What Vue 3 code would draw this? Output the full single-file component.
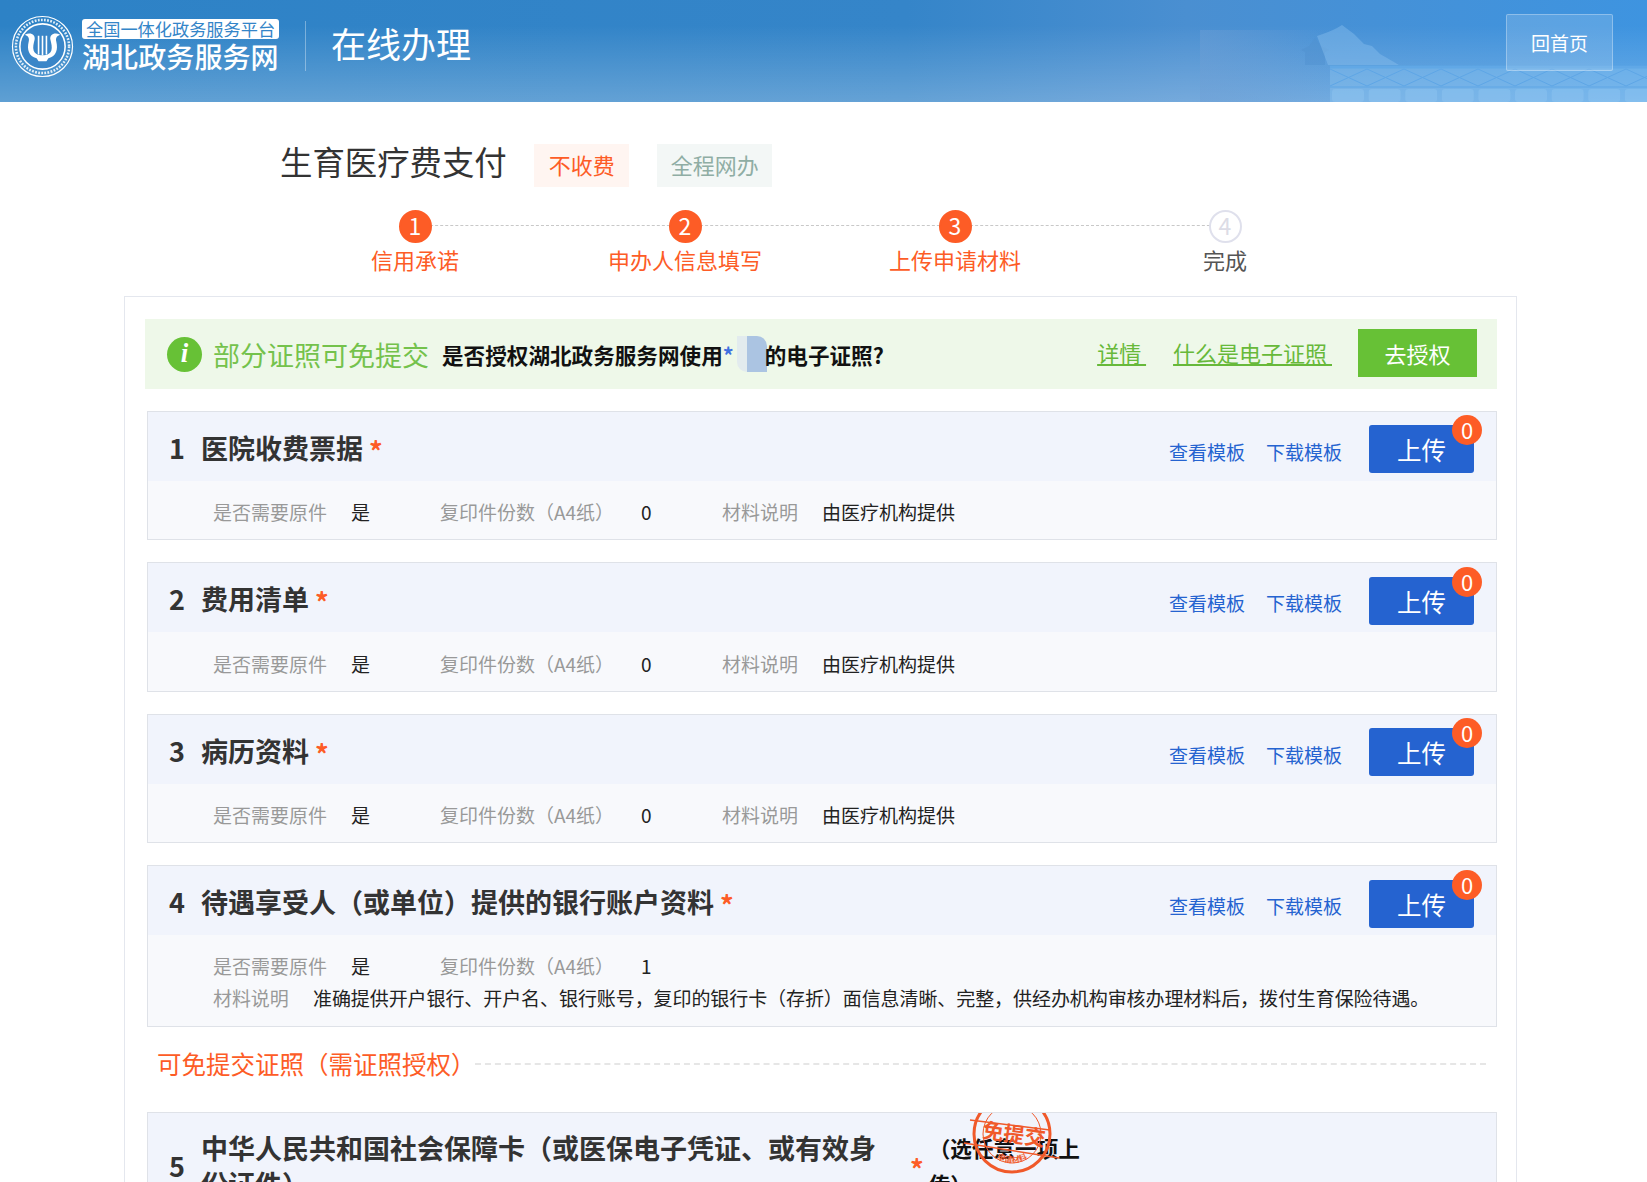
<script setup>
const items = [
  { n: 1, title: '医院收费票据', copies: 0, desc: '由医疗机构提供' },
  { n: 2, title: '费用清单', copies: 0, desc: '由医疗机构提供' },
  { n: 3, title: '病历资料', copies: 0, desc: '由医疗机构提供' },
  { n: 4, title: '待遇享受人（或单位）提供的银行账户资料', copies: 1, long: true, desc: '准确提供开户银行、开户名、银行账号，复印的银行卡（存折）面信息清晰、完整，供经办机构审核办理材料后，拨付生育保险待遇。' },
]
const steps = [
  { n: 1, label: '信用承诺', done: true },
  { n: 2, label: '申办人信息填写', done: true },
  { n: 3, label: '上传申请材料', done: true },
  { n: 4, label: '完成', done: false },
]
const lattice = Array.from({ length: 10 }, (_, i) => i)
const arches = Array.from({ length: 9 }, (_, i) => i)
</script>

<template>
  <div class="page">
    <header class="top">
      <svg class="scene" width="447" height="102" viewBox="0 0 447 102">
        <defs>
          <linearGradient id="haze" x1="0" y1="0" x2="1" y2="0">
            <stop offset="0" stop-color="#6f9fd4" stop-opacity=".45"/>
            <stop offset="1" stop-color="#6f9fd4" stop-opacity="0"/>
          </linearGradient>
        </defs>
        <rect x="0" y="30" width="130" height="72" fill="url(#haze)"/>
        <path d="M105 65V52l-4-2 8-4 6-8 6 8 8 4-4 2v13z" fill="#4f90cf" opacity=".45"/>
        <path d="M117 36c8-3 15-5 20-8l5-3 12 9 10 10 8 2 8 8 7 4 12 7H128z" fill="#8fc4ef" opacity=".4"/>
        <rect x="130" y="66" width="317" height="36" fill="#8cc6f2" opacity=".4"/>
        <g stroke="#5ea6e6" fill="none">
          <path d="M130 67H447" stroke-width="3" opacity=".8"/>
          <path v-for="i in lattice" :key="i" :d="`M${130 + i * 37} 69l37 17M${167 + i * 37} 69l-37 17`" stroke-width="1"/>
          <path d="M130 87H447" stroke-width="2" opacity=".5"/>
        </g>
        <rect v-for="i in arches" :key="'a' + i" :x="132 + i * 36.6" y="89" width="32" height="13" rx="3" fill="#a4d3f6" opacity=".25"/>
      </svg>
      <div class="brand">
        <svg class="seal" width="63" height="63" viewBox="0 0 64 64">
          <circle cx="32" cy="32" r="30.5" fill="none" stroke="#fff" stroke-width="1.2"/>
          <circle cx="32" cy="32" r="27" fill="none" stroke="#fff" stroke-width="2.6" stroke-dasharray="1.8 1.4" opacity=".85"/>
          <circle cx="32" cy="32" r="23" fill="#3a86c8" stroke="#fff" stroke-width="1.6"/>
          <path d="M14 20C20 17 25 20 24 25C23 29 22 33 23 36C24 39 27 41 32 41C37 41 40 39 41 36C42 33 41 29 40 25C39 20 44 17 50 20C47 21 45 23 46 27C48 35 46 42 38 44L36 47H28L26 44C18 42 16 35 18 27C19 23 17 21 14 20Z" fill="#fff"/>
          <path d="M28 21V40M32 21V41M36 21V40" stroke="#fff" stroke-width="1.6" fill="none"/>
        </svg>
        <div class="brand-text">
          <span class="brand-sub">全国一体化政务服务平台</span>
          <span class="brand-main">湖北政务服务网</span>
        </div>
      </div>
      <div class="divider"></div>
      <div class="page-name">在线办理</div>
      <button class="home">回首页</button>
    </header>

    <div class="heading">
      <h1>生育医疗费支付</h1>
      <span class="tag tag-fee">不收费</span>
      <span class="tag tag-net">全程网办</span>
    </div>

    <div class="steps">
      <div v-for="s in steps" :key="s.n" class="step" :class="{ on: s.done }">
        <span class="num">{{ s.n }}</span>
        <span class="label">{{ s.label }}</span>
      </div>
    </div>

    <main class="box">
      <div class="notice">
        <span class="info"><i>i</i></span>
        <span class="notice-title">部分证照可免提交</span>
        <span class="notice-q">是否授权湖北政务服务网使用<em>*</em><span class="blur"></span>的电子证照?</span>
        <a class="n-link first">详情&nbsp;</a>
        <a class="n-link">什么是电子证照&nbsp;</a>
        <button class="auth">去授权</button>
      </div>

      <section v-for="it in items" :key="it.n" class="card">
        <div class="card-head">
          <span class="idx">{{ it.n }}</span>
          <span class="name">{{ it.title }}</span>
          <span class="star">*</span>
          <span class="acts">
            <a>查看模板</a>
            <a>下载模板</a>
            <button class="upload">上传<b>0</b></button>
          </span>
        </div>
        <div class="card-body" :class="{ stack: it.long }">
          <div class="meta-row">
            <span class="k k1">是否需要原件</span><span class="v v1">是</span>
            <span class="k k2">复印件份数（A4纸）</span><span class="v v2">{{ it.copies }}</span>
            <template v-if="!it.long">
              <span class="k k3">材料说明</span><span class="v">{{ it.desc }}</span>
            </template>
          </div>
          <div v-if="it.long" class="meta-row tight">
            <span class="k k4">材料说明</span><span class="v">{{ it.desc }}</span>
          </div>
        </div>
      </section>

      <div class="free">
        <span>可免提交证照（需证照授权）</span>
        <i></i>
      </div>

      <section class="card last">
        <div class="card-head tall">
          <span class="idx">5</span>
          <span class="name wrap">中华人民共和国社会保障卡（或医保电子凭证、或有效身份证件）</span>
          <span class="star">*</span>
          <span class="pick">（选任意一项上传）</span>
          <svg class="stamp" width="100" height="100" viewBox="0 0 100 100">
            <defs>
              <path id="stamp-arc" d="M22 62A32 32 0 0 0 78 62"/>
            </defs>
            <g fill="none" stroke="#f0592a">
              <circle cx="50" cy="50" r="38" stroke-width="3"/>
              <circle cx="50" cy="50" r="29" stroke-width="1"/>
              <path d="M8 36L88 46M2 59L97 74" stroke-width="1.4"/>
            </g>
            <text x="51" y="58" transform="rotate(8 51 58)" text-anchor="middle" class="stamp-big">免提交</text>
            <text class="stamp-small" text-anchor="middle"><textPath href="#stamp-arc" startOffset="50%">申请材料</textPath></text>
          </svg>
        </div>
      </section>
    </main>
  </div>
</template>

<style>
html, body { margin: 0; background: #fff; overflow: hidden; }
</style>

<style scoped>
.page {
  height: 1182px;
  overflow: hidden;
  font-family: "Noto Sans CJK SC", "Noto Sans", sans-serif;
  color: #333;
}
.top {
  position: relative;
  height: 102px;
  display: flex;
  align-items: center;
  padding: 0 34px 10px 11px;
  box-sizing: border-box;
  overflow: hidden;
  background:
    linear-gradient(180deg, rgba(255,255,255,0) 25%, rgba(255,255,255,.24) 100%),
    linear-gradient(90deg, #2d82c6 0%, #3585c9 55%, #4a8fd1 72%, #3e94e0 100%);
  color: #fff;
}
.scene { position: absolute; right: 0; top: 0; }
.brand { position: relative; display: flex; align-items: center; }
.seal { flex: none; }
.brand-text { display: flex; flex-direction: column; margin-left: 8px; }
.brand-sub {
  background: #fff;
  color: #3485c8;
  border-radius: 3px;
  font-size: 17.2px;
  line-height: 20px;
  padding: 0 4px;
  white-space: nowrap;
}
.brand-main { font-size: 28px; line-height: 34px; font-weight: 500; letter-spacing: 0.1px; white-space: nowrap; }
.divider { position: relative; width: 1px; height: 50px; background: rgba(255,255,255,.35); margin: 0 25px 0 26px; }
.page-name { position: relative; font-size: 35px; line-height: 44px; font-weight: 400; margin-bottom: 6px; }
.home {
  position: relative;
  margin-left: auto;
  margin-bottom: 7px;
  width: 107px;
  height: 57px;
  box-sizing: border-box;
  border: 1px solid rgba(255,255,255,.3);
  border-radius: 2px;
  background: rgba(255,255,255,.15);
  color: #fff;
  font: inherit;
  font-size: 19px;
}
.heading { display: flex; align-items: center; padding: 39px 0 0 280px; height: 46px; }
.heading h1 { margin: 0 27px 6px 0; font-size: 32.4px; font-weight: 400; line-height: 46px; color: #333; white-space: nowrap; }
.tag { height: 43px; line-height: 41px; font-size: 22px; padding: 0 14.5px 0 15px; margin-right: 27.5px; margin-top: 3px; }
.tag-fee { background: #fff5f1; color: #fd5c26; }
.tag-net { background: #f3f7f6; color: #8fada4; margin-right: 0; padding: 0 13.5px 0 14px; }
.steps { display: flex; justify-content: center; margin: 23px 0 0 0; padding-right: 7px; position: relative; }
.step { position: relative; width: 270px; display: flex; flex-direction: column; align-items: center; }
.step::after {
  content: "";
  position: absolute;
  left: 50%;
  top: 15px;
  width: 270px;
  border-top: 1px dashed #c8c8c8;
}
.step:last-child::after { display: none; }
.num {
  position: relative;
  z-index: 1;
  width: 33px;
  height: 33px;
  box-sizing: border-box;
  border-radius: 50%;
  text-align: center;
  line-height: 27px;
  font-size: 23px;
  background: #fff;
  border: 2px solid #dfe0ec;
  color: #dcdce6;
}
.step.on .num { background: #fd5c26; border-color: #fd5c26; color: #fff; }
.label { font-size: 22px; line-height: 34px; margin-top: -1px; color: #555; white-space: nowrap; }
.step.on .label { color: #fd5c26; }
.box {
  margin: 20px 0 0 124px;
  width: 1393px;
  box-sizing: border-box;
  height: 900px;
  border: 1px solid #e4e7ee;
  padding: 22px 19px 0 20px;
}
.notice {
  display: flex;
  align-items: center;
  height: 70px;
  background: #eef8e9;
  padding: 0 20px 0 22px;
  margin-bottom: 21.5px;
}
.info {
  width: 35px;
  height: 35px;
  flex: none;
  border-radius: 50%;
  background: #67c136;
  color: #fff;
  text-align: center;
  line-height: 33px;
  font-family: "Liberation Serif", serif;
  font-size: 27px;
  font-weight: 700;
}
.notice-title { color: #74c24c; font-size: 27px; margin-left: 11px; white-space: nowrap; }
.notice-q { color: #111; font-size: 21.6px; font-weight: 700; margin-left: 13px; white-space: nowrap; display: flex; align-items: center; }
.notice-q em { color: #3f6fe0; font-style: normal; width: 14px; }
.blur {
  display: inline-block;
  width: 30px;
  height: 36px;
  margin: 0 -2px 0 0;
  background: linear-gradient(90deg, #e2ebee 35%, #abc4e2 35%);
  border-radius: 0 10px 0 10px;
}
.n-link { color: #67b93a; font-size: 22px; text-decoration: underline; white-space: nowrap; margin-left: 27px; margin-bottom: 4px; }
.n-link.first { margin-left: auto; }
.auth {
  width: 119px;
  height: 48px;
  margin-left: 26px;
  margin-bottom: 2px;
  flex: none;
  border: 0;
  background: #67c136;
  color: #fff;
  font: inherit;
  font-size: 22px;
}
.card {
  width: 1350px;
  margin: 0 0 22px 2px;
  box-sizing: border-box;
  border: 1px solid #dfe2e8;
  background: #f8f9fc;
}
.card-head {
  position: relative;
  display: flex;
  align-items: center;
  height: 69px;
  background: #f1f4fc;
  padding: 0 22px 0 21px;
}
.idx { font-size: 27px; font-weight: 700; color: #333; width: 32px; flex: none; margin-top: 2px; }
.name { font-size: 27px; font-weight: 700; color: #333; white-space: nowrap; margin-top: 2px; }
.star { color: #fd5c26; font-size: 27px; font-weight: 700; margin-left: 6px; margin-top: 8px; }
.acts { display: flex; align-items: center; margin-left: auto; }
.acts a { color: #2563d0; font-size: 19px; margin-right: 21px; margin-top: 10px; white-space: nowrap; }
.upload {
  position: relative;
  width: 105px;
  height: 48px;
  margin-left: 6px;
  border: 0;
  border-radius: 3px;
  background: #2563d0;
  color: #fff;
  font: inherit;
  font-size: 24.5px;
  padding: 0;
  line-height: 50px;
  margin-top: 6px;
}
.upload b {
  position: absolute;
  right: -8px;
  top: -10px;
  width: 30px;
  height: 30px;
  border-radius: 50%;
  background: #fd5c26;
  font-weight: 400;
  font-size: 22px;
  line-height: 29px;
  z-index: 1;
}
.card-body { padding: 15.5px 0 11px 65px; }
.stack { padding-top: 15px; padding-bottom: 11.5px; }
.meta-row { display: flex; font-size: 19px; line-height: 32px; white-space: nowrap; }
.tight { letter-spacing: -0.08px; }
.k { color: #999; }
.v { color: #222; }
.v1 { margin-left: 24px; width: 89px; }
.k2 { width: 201px; }
.v2 { width: 81px; }
.k3 { width: 100px; }
.k4 { width: 100px; }
.free { display: flex; align-items: center; margin: -2px 11px 31px 12px; height: 34px; color: #fd5c26; font-size: 24.5px; white-space: nowrap; }
.free i { flex: 1; margin-left: -1px; border-top: 2px dashed #e6e6e6; }
.card.last { margin-bottom: 0; }
.card-head.tall { height: 106px; overflow: hidden; }
.tall .idx { margin-top: 0; }
.tall .wrap { white-space: normal; width: 680px; flex: none; line-height: 36px; align-self: flex-start; margin-top: 17px; }
.tall .star { margin: 6px 0 0 29px; }
.pick { width: 156px; margin-left: 5px; font-size: 21.6px; font-weight: 700; color: #111; line-height: 36px; align-self: flex-start; margin-top: 17px; }
.stamp { position: absolute; left: 814px; top: -29px; }
.stamp-big { font-size: 21px; fill: #f0592a; font-weight: 700; }
.stamp-small { font-size: 8px; fill: #f0592a; font-weight: 700; }
</style>
